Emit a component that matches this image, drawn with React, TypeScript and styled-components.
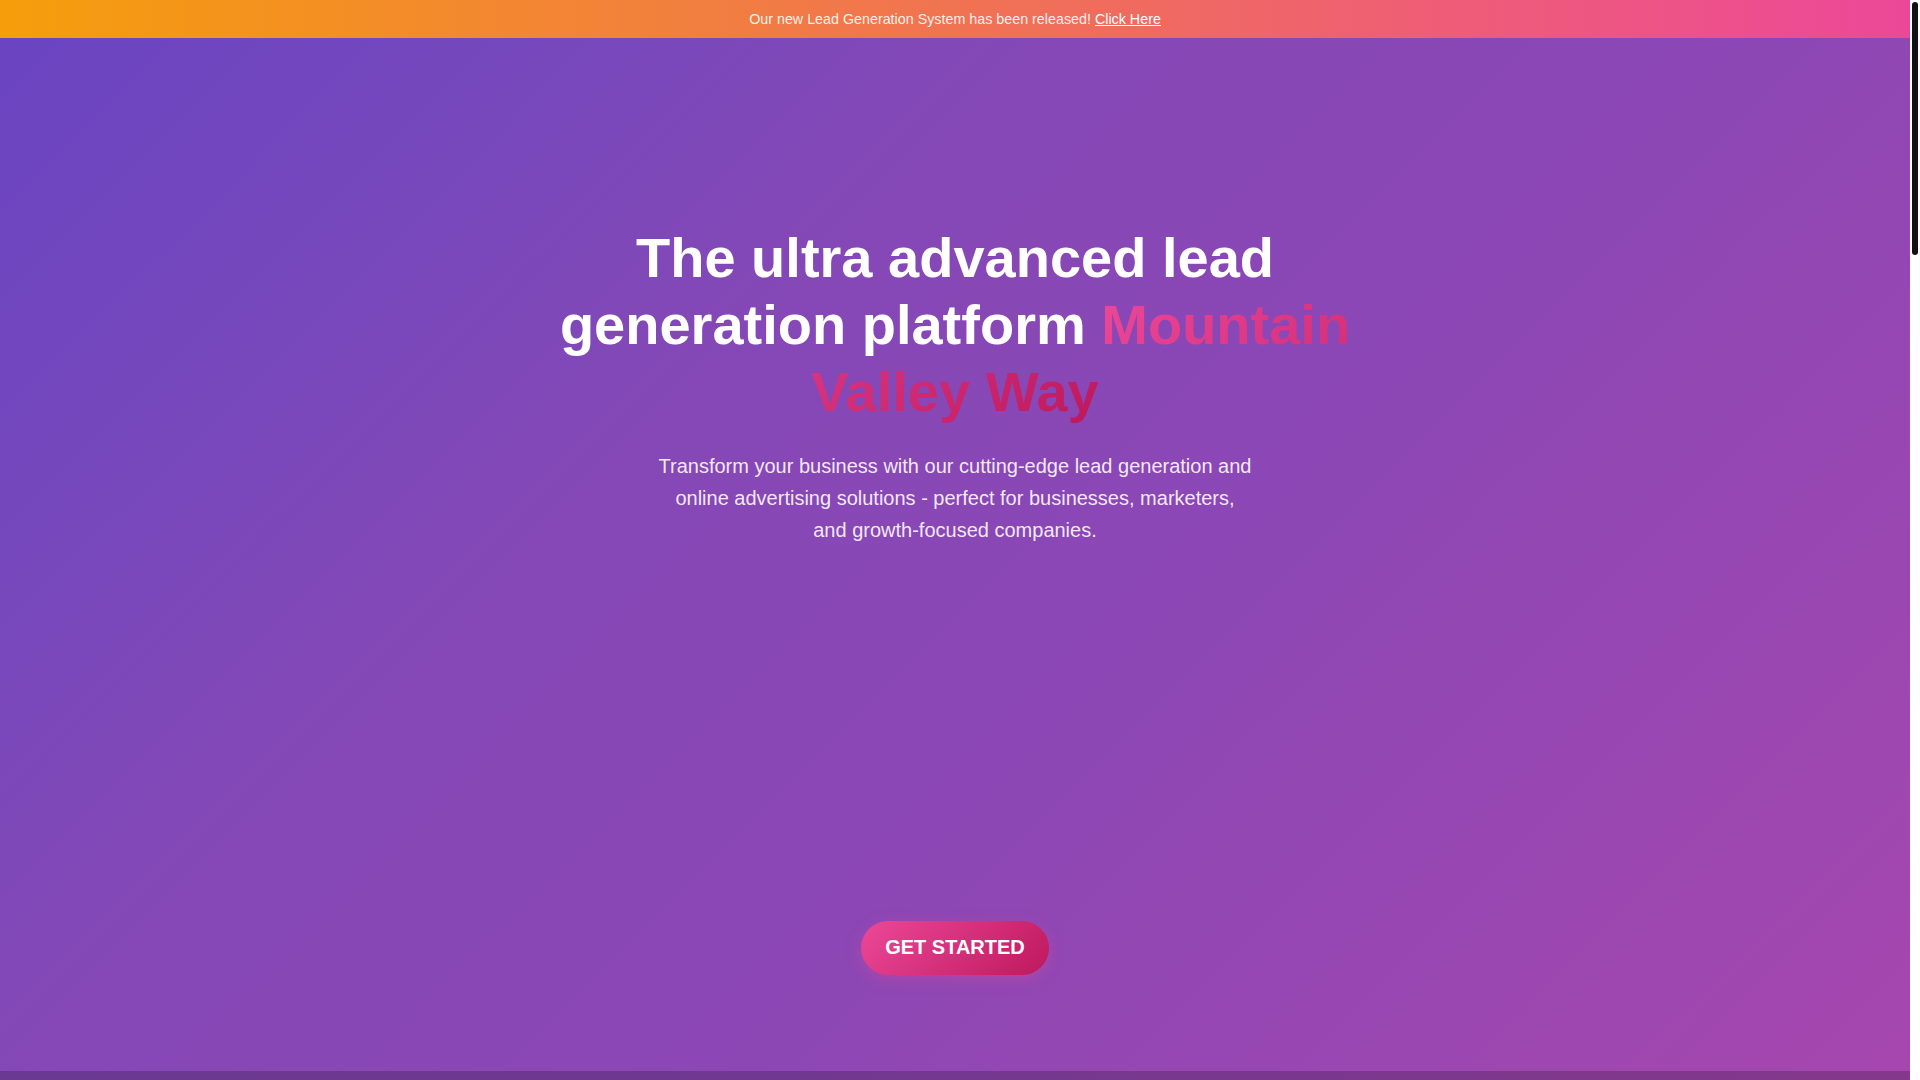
import styled, { createGlobalStyle } from "styled-components";

const GlobalStyle = createGlobalStyle`
  html, body {
    margin: 0;
    padding: 0;
    height: 100%;
    overflow: hidden;
  }

  body {
    font-family: "Liberation Sans", Arial, sans-serif;
    color: white;
  }
`;

const Frame = styled.div`
  display: flex;
  height: 100vh;
  background: white;
`;

const Scroller = styled.div`
  flex: 1;
  overflow-y: auto;
  scrollbar-width: none;

  &::-webkit-scrollbar {
    display: none;
  }
`;

const ScrollRail = styled.div`
  width: 10px;
  flex-shrink: 0;
  box-sizing: border-box;
  padding: 2px;
  background: white;
`;

const ScrollThumb = styled.div`
  height: 253px;
  border-radius: 4px;
  background: #111;
`;

const PageBackground = styled.div`
  background: linear-gradient(
    135deg,
    #6a44c2 0%,
    #7748bc 21%,
    #8448b6 35%,
    #8c47b5 60%,
    #a647ae 100%
  );
  background-size: 100% 1080px;
  background-repeat: no-repeat;
  background-color: #8a47b4;
`;

const AnnouncementBar = styled.div`
  height: 38px;
  display: flex;
  align-items: center;
  justify-content: center;
  background: linear-gradient(90deg, #f59e0b 0%, #ec4899 100%);
  font-size: 14.3px;
  color: rgba(255, 255, 255, 0.92);
`;

const AnnouncementLink = styled.a`
  color: white;
  text-decoration: underline;
  margin-left: 4px;
  cursor: pointer;
`;

const Hero = styled.section`
  height: 1033px;
  box-sizing: border-box;
  padding: 186px 2rem 0;
  display: flex;
  flex-direction: column;
  align-items: center;
  text-align: center;
`;

const Headline = styled.h1`
  max-width: 800px;
  margin: 0 0 24px;
  font-size: 56px;
  font-weight: 700;
  line-height: 1.2;
  color: white;
`;

const Highlight = styled.span`
  background: linear-gradient(135deg, #ec4899 0%, #be185d 100%);
  -webkit-background-clip: text;
  -webkit-text-fill-color: transparent;
  background-clip: text;
`;

const Subtitle = styled.p`
  max-width: 595px;
  margin: 0;
  font-size: 20px;
  line-height: 1.6;
  color: rgba(255, 255, 255, 0.9);
`;

const HeroVisual = styled.div`
  width: 100%;
  max-width: 800px;
  height: 327px;
  margin: 24px 0;
`;

const CtaButton = styled.button`
  font-family: inherit;
  font-size: 20px;
  font-weight: 700;
  color: white;
  border: none;
  border-radius: 50px;
  padding: 15.5px 24px;
  background: linear-gradient(135deg, #ec4899 0%, #be185d 100%);
  box-shadow: 0 4px 15px rgba(236, 72, 153, 0.35);
  cursor: pointer;
`;

const Section = styled.section<{ $height: number }>`
  min-height: ${(p) => p.$height}px;
  box-sizing: border-box;
  padding: 80px 2rem;
  background: rgba(0, 0, 0, 0.2);
  display: flex;
  flex-direction: column;
  align-items: center;
  text-align: center;
`;

const SectionTitle = styled.h2`
  margin: 0 0 16px;
  font-size: 40px;
  font-weight: 700;
`;

const SectionText = styled.p`
  max-width: 600px;
  margin: 0;
  font-size: 18px;
  line-height: 1.6;
  color: rgba(255, 255, 255, 0.85);
`;

export default function App() {
  return (
    <>
      <GlobalStyle />
      <Frame>
        <Scroller>
          <PageBackground>
            <AnnouncementBar>
              Our new Lead Generation System has been released!
              <AnnouncementLink>Click Here</AnnouncementLink>
            </AnnouncementBar>

            <Hero>
              <Headline>
                The ultra advanced lead generation platform{" "}
                <Highlight>Mountain Valley Way</Highlight>
              </Headline>
              <Subtitle>
                Transform your business with our cutting-edge lead generation
                and online advertising solutions - perfect for businesses,
                marketers, and growth-focused companies.
              </Subtitle>
              <HeroVisual />
              <CtaButton>GET STARTED</CtaButton>
            </Hero>

            <Section $height={1200}>
              <SectionTitle>Features</SectionTitle>
              <SectionText>
                Everything you need to capture, qualify and convert more leads.
              </SectionText>
            </Section>
            <Section $height={1200}>
              <SectionTitle>How It Works</SectionTitle>
              <SectionText>
                Launch campaigns in minutes and watch the leads roll in.
              </SectionText>
            </Section>
            <Section $height={1130}>
              <SectionTitle>Get Started Today</SectionTitle>
              <SectionText>
                Join the growth-focused companies already on board.
              </SectionText>
            </Section>
          </PageBackground>
        </Scroller>
        <ScrollRail>
          <ScrollThumb />
        </ScrollRail>
      </Frame>
    </>
  );
}
